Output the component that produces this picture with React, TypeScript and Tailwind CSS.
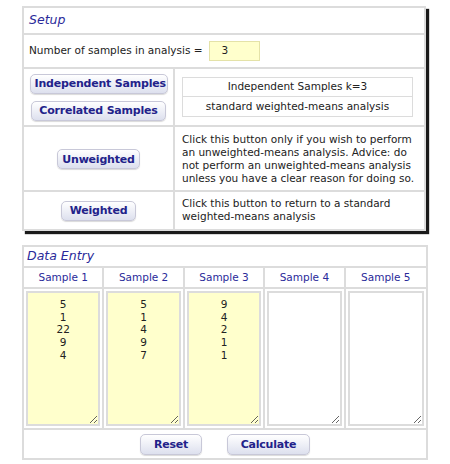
import React from "react"

const btn =
  "whitespace-nowrap rounded-[5px] border border-[#c8c8d8] bg-gradient-to-b from-white to-[#dde0ee] px-1 font-bold tracking-[-0.2px] text-[#22228a] shadow-[0_1px_1px_rgba(0,0,0,0.15)] leading-none"

const samples = [
  ["5", "1", "22", "9", "4"],
  ["5", "1", "4", "9", "7"],
  ["9", "4", "2", "1", "1"],
  [],
  [],
]

export default function App() {
  return (
    <main className="min-h-[464px] bg-white pl-[22px] pt-[6px] font-['DejaVu_Sans',Verdana,sans-serif] text-[10.5px] text-[#222]">
      <section className="w-[404px] border-2 border-[#dcdcdc] shadow-[3px_3px_1px_#1a1a1a]">
        <div className="flex h-[27px] items-center border-b-2 border-[#dcdcdc] px-[5px] text-[12.5px] italic text-[#2a2a9a]">
          Setup
        </div>
        <div className="flex h-[34px] items-center border-b-2 border-[#dcdcdc] px-[5px]">
          <span>Number of samples in analysis =</span>
          <div className="ml-[6px] flex h-[20px] w-[51px] items-center border border-[#e4e2a8] bg-[#ffffcc] pl-[12px]">
            3
          </div>
        </div>
        <div className="grid grid-cols-[151px_1fr] border-b-2 border-[#dcdcdc]">
          <div className="flex h-[56px] flex-col items-center justify-center gap-[7px] border-r-2 border-[#dcdcdc]">
            <button className={`${btn} h-[20px] w-[138px] text-[11px]`}>Independent Samples</button>
            <button className={`${btn} h-[20px] w-[135px] text-[11px]`}>Correlated Samples</button>
          </div>
          <div className="flex items-center pl-[7px]">
            <div className="w-[231px] border border-[#dcdcdc] text-center">
              <div className="flex h-[19px] items-center justify-center border-b border-[#dcdcdc]">
                Independent Samples k=3
              </div>
              <div className="flex h-[19px] items-center justify-center">standard weighted-means analysis</div>
            </div>
          </div>
        </div>
        <div className="grid h-[65px] grid-cols-[151px_1fr] border-b-2 border-[#dcdcdc]">
          <div className="flex items-center justify-center border-r-2 border-[#dcdcdc]">
            <button className={`${btn} h-[20px] w-[83px] text-[11px]`}>Unweighted</button>
          </div>
          <p className="py-[6px] pl-[7px] pr-[2px] leading-[13px]">
            Click this button only if you wish to perform an unweighted-means analysis. Advice: do not perform an
            unweighted-means analysis unless you have a clear reason for doing so.
          </p>
        </div>
        <div className="grid h-[37px] grid-cols-[151px_1fr]">
          <div className="flex items-center justify-center border-r-2 border-[#dcdcdc]">
            <button className={`${btn} h-[20px] w-[75px] text-[11px]`}>Weighted</button>
          </div>
          <p className="py-[5px] pl-[7px] pr-[2px] leading-[13px]">
            Click this button to return to a standard weighted-means analysis
          </p>
        </div>
      </section>

      <section className="mt-[14px] w-[406px] border-2 border-[#dcdcdc]">
        <div className="flex h-[21px] items-center border-b-2 border-[#dcdcdc] px-[3px] text-[12.5px] italic text-[#2a2a9a]">
          Data Entry
        </div>
        <div className="grid grid-cols-5 border-b-2 border-[#dcdcdc]">
          {samples.map((_, i) => (
            <div
              key={i}
              className={`flex h-[19px] items-center justify-center text-[#2a2a9a] ${i < 4 ? "border-r-2 border-[#dcdcdc]" : ""}`}
            >
              Sample {i + 1}
            </div>
          ))}
        </div>
        <div className="grid grid-cols-5 border-b-2 border-[#dcdcdc]">
          {samples.map((vals, i) => (
            <div key={i} className={`p-[2px] ${i < 4 ? "border-r-2 border-[#dcdcdc]" : ""}`}>
              <textarea
                readOnly
                value={vals.join("\n")}
                className={`block h-[135px] w-full resize-y border-2 border-[#dcdcdc] pt-[5px] text-center text-[10.5px] leading-[12.7px] text-[#222] outline-none ${vals.length ? "bg-[#ffffcc]" : "bg-white"}`}
              />
            </div>
          ))}
        </div>
        <div className="flex h-[28px] items-center justify-center gap-[25px]">
          <button className={`${btn} h-[21px] w-[62px] text-[11px]`}>Reset</button>
          <button className={`${btn} h-[21px] w-[83px] text-[11px]`}>Calculate</button>
        </div>
      </section>
    </main>
  )
}
